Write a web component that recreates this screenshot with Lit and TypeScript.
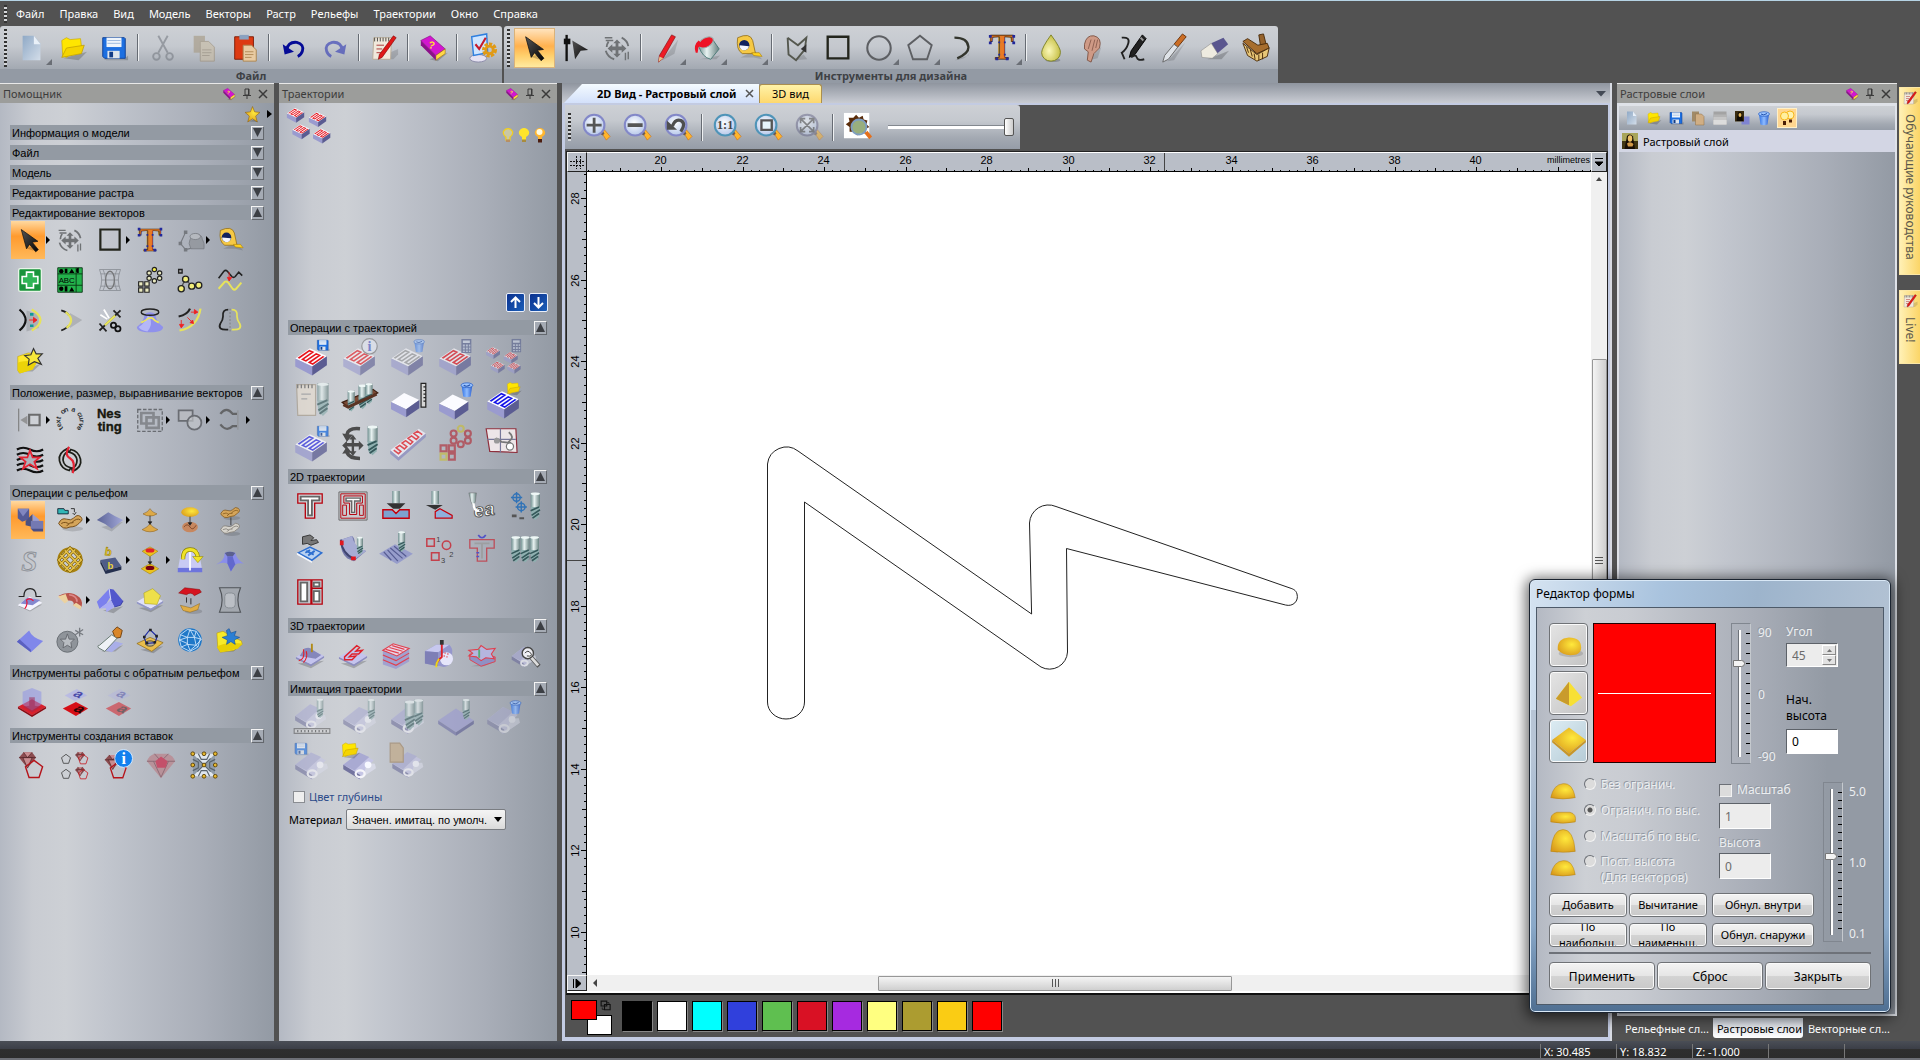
import { LitElement, html, css, svg, nothing, TemplateResult } from "lit";
import { customElement, property, state } from "lit/decorators.js";
import { classMap } from "lit/directives/class-map.js";
import { styleMap } from "lit/directives/style-map.js";

type Art = TemplateResult;

/* ---------- reusable drawing parts, all on a 32 x 32 field ---------- */

const at = (x: number, y: number, s: number, art: Art): Art =>
  svg`<g transform="translate(${x} ${y}) scale(${s})">${art}</g>`;
const faded = (art: Art, o = 0.5): Art => svg`<g opacity=${o}>${art}</g>`;

const cursor = svg`<path d="M11 25l8 3 7-1-6-4z" fill="#0003"/><path d="M6 4l19 13.500-6.500 1 7 8.500-3 2.500-7-8.500-3.500 5z" fill="url(#dark)" stroke="#111" stroke-width=".8"/>`;
const floppy = svg`<path d="M5 28h22l4-4v5H8z" fill="#0003"/><path d="M4 5h23l1 1v21H6l-2-2z" fill="#1d6fe0" stroke="#0d3f95"/><path d="M8 5h16v10H8z" fill="#eef4fb"/><path d="M9 19h13v8H9z" fill="#dfe5ec"/><path d="M11 20h4v6h-4z" fill="#123c86"/><path d="M9 8h14M9 11h14" stroke="#9bb8de"/>`;
const folder = svg`<path d="M6 27l16 2 9-9z" fill="#0003"/><path d="M4 8l5-3 4 2 11-1 1 8-16 12-4-2z" fill="#ffe600" stroke="#c9a800" stroke-width=".7"/><path d="M4 26l5-10 19-3-3 9z" fill="#f5d400" stroke="#b99700" stroke-width=".7"/>`;
const page = svg`<path d="M6 3h12l7 8v18H6z" fill="url(#page)"/><path d="M18 3v9h7z" fill="#e9f0f8"/>`;
const bin = svg`<path d="M6 9l3 20q7 3 14 0l3-20z" fill="url(#bin)"/><ellipse cx="16" cy="8" rx="11" ry="4.500" fill="#9ec6ff" stroke="#2c62c4" stroke-width="1.500"/><path d="M10 8q5 4 12-1" stroke="#2453b0" stroke-width="2" fill="none"/>`;
const calc = svg`<path d="M6 2h20v28H6z" fill="#59638f"/><path d="M9 5h14v5H9z" fill="#cdd5e6"/><path d="M9 13h4v4H9zM15 13h4v4h-4zM21 13h3v4h-3zM9 19h4v4H9zM15 19h4v4h-4zM21 19h3v4h-3zM9 25h4v3H9zM15 25h4v3h-4zM21 25h3v3h-3z" fill="#b9c3da"/>`;
const cutter = svg`<path d="M11 2h10v16H11z" fill="url(#steel)"/><path d="M11 17h10l-1 10-4 4-4-4z" fill="#8fb0b0"/><path d="M11 21l9-4M12 26l9-6M13 29l7-5" stroke="#35585a" stroke-width="1.800"/><ellipse cx="16" cy="3" rx="5" ry="1.500" fill="#eef7f6"/>`;
const snake = (c: string): Art =>
  svg`<path transform="matrix(1.300 -.9 1.500 .7 2 15)" d="M1 1H8.500V3H1.500V5H8.500V7H1.500V9H9" fill="none" stroke=${c} stroke-width="1"/>`;
const slab = svg`<path d="M2 15L15 6l15 7-13 9z" fill="#fbfbff"/><path d="M2 15l15 7v8L2 22z" fill="#9a9bcf"/><path d="M17 22l13-9v8l-13 9z" fill="#5b5c92"/>`;
const block = (c: string): Art => svg`${slab}${snake(c)}`;
const plate = (top: string, edge: string): Art =>
  svg`<path d="M3 25l14 5 14-8z" fill="#0003"/><path d="M1 18L16 9l15 8-14 9z" fill=${top}/><path d="M1 18l16 8v2L1 20zM17 26l14-9v2l-14 9z" fill=${edge}/>`;
const lens = (rim: string, inner: Art): Art =>
  svg`<path d="M22 22l3-3 6 7-4 4z" fill="#ffb52b" stroke="#c76a10" stroke-width=".6"/><path d="M20 23l3-3 2 3-2 2z" fill="#6a5a56"/><circle cx="14" cy="14" r="11" fill="url(#lens)" stroke=${rim} stroke-width="2.200"/>${inner}`;
const xform = svg`<g fill="none" stroke="#6f7275" stroke-width="2"><path d="M21 5q6 3 7 9M4 19q2 7 9 9M5 15q0-3 2-6"/><path d="M3 5h8M4 8h8M25 21v8M28 20v8" stroke-width="1.500"/></g><path d="M16 7l4 4h-2.500v3.500H21V12l5 4.500-5 4.500v-2.500h-3.500V22H20l-4 4-4-4h2.500v-3.500H11V21l-5-4.500L11 12v2.500h3.500V11H12z" fill="#6f7275"/>`;
const tape = svg`<path d="M8 26h14l9 2-8-9z" fill="#0002"/><path d="M5 5q13-6 16 3l3 14H10Q3 18 5 5z" fill="#f6c945" stroke="#8b6510" stroke-width=".8"/><path d="M20 21h8l3 4-9-1z" fill="#ffd21f" stroke="#a87900" stroke-width=".6"/><circle cx="12" cy="13" r="5.500" fill="#11225f"/><path d="M7 13a5 5 0 0 0 10 1z" fill="#f4f6ff"/>`;
const gem = (a: string, b: string, c: string): Art =>
  svg`<path d="M3 13L10 5h13l6 8-13 16z" fill=${a}/><path d="M10 5l6 8 7-8M3 13h26M9 13l7 16 7-16z" fill=${b} stroke=${c} stroke-width="1"/>`;
const penta = (c: string): Art => svg`<path d="M16 4l12 9-5 15H9L4 13z" fill="none" stroke=${c} stroke-width="2"/>`;
const shapeT = (stroke: string): Art =>
  svg`<path d="M3 3h26v10h-8v16H11V13H3z" fill="#d5d8dc" stroke=${stroke} stroke-width="1.400"/><path d="M6 6h20v4h-8v16h-4V10H6z" fill="#fff" stroke="#666" stroke-width="2"/>`;
const swirl = (a: string, b: string): Art =>
  svg`<ellipse cx="19" cy="26" rx="12" ry="3" fill="#0002"/><path d="M3 20q3-7 9-5 5 2 8-1 4-5 8-2 4 4-1 7-4 5-11 5-8 4-13-4z" fill=${a} stroke=${b}/><path d="M6 20q5-3 9 1M18 19q6-6 10-3M12 23q3-5 8-4" fill="none" stroke=${b}/>`;
const carved = svg`<path d="M2 16L16 5l13 7-3 3q4 2 3 5l-13 9z" fill="#c5c5e5"/><path d="M2 16L16 5l9 4-13 12z" fill="#a9aad2"/><path d="M2 16l15 9v4L2 20z" fill="#73749f"/><path d="M30 15q-8-1-9 7l-5 7 15-10z" fill="#d7d9e6"/><ellipse cx="17" cy="24" rx="4" ry="3" fill="none" stroke="#f5f5fa" stroke-width="2"/><circle cx="24" cy="16" r="3" fill="#f7f8ff"/>`;
const isoA = (fill: string): Art =>
  svg`<text transform="matrix(.9 .35 -.7 .6 12 20)" font-family="Liberation Sans" font-weight="bold" font-size="17" fill=${fill}>a</text>`;
const dome = (d: string): Art =>
  svg`<path d=${d} fill="url(#gold)" stroke="#a77a12" stroke-width=".5"/>`;

const curveWord = Array.from("text on a curve").map((ch, i) => {
  const deg = -130 + i * 18.5;
  return ch === " " ? nothing
    : svg`<text transform="rotate(${deg} 16 17) translate(16 6)" text-anchor="middle">${ch}</text>`;
});

/* ---------- icon table ---------- */

const ICONS: Record<string, Art> = {
  page, folder, floppy, cursor, xform, tape, bin,
  cut: faded(svg`<path d="M11 3l10 18M21 3L11 21" stroke="#777c84" stroke-width="2"/><circle cx="9" cy="25" r="3.500" fill="none" stroke="#777c84" stroke-width="2"/><circle cx="23" cy="25" r="3.500" fill="none" stroke="#777c84" stroke-width="2"/>`, 0.6),
  copy: faded(svg`<path d="M5 3h12v18H5z" fill="#a79b86"/><path d="M12 9h9l6 6v15H12z" fill="#c9bda6" stroke="#9b8e78"/><path d="M14 18h10M14 21h10M14 24h8" stroke="#9b8e78"/>`, 0.65),
  paste: svg`<path d="M5 4h20v24H5z" fill="#dd3a12" stroke="#7e1d06"/><path d="M10 2h10v5H10z" fill="#8aa1c0"/><path d="M14 13h9l5 5v12H14z" fill="#e9cba2" stroke="#aa8450"/><path d="M16 20h9M16 23h9M16 26h7" stroke="#b18b57"/>`,
  undo: svg`<path d="M8 18q2-9 11-8 8 2 6 9-1 4-5 6" fill="none" stroke="#050b96" stroke-width="3"/><path d="M4 12l2 11 10-3z" fill="#050b96"/>`,
  redo: faded(svg`<path d="M24 18q-2-9-11-8-8 2-6 9 1 4 5 6" fill="none" stroke="#4a52b8" stroke-width="3"/><path d="M28 12l-2 11-10-3z" fill="#4a52b8"/>`, 0.75),
  notes: svg`<path d="M6 28h20l5-5v-6z" fill="#0002"/><path d="M5 5h19l-1 23H4z" fill="#f1e9dc" stroke="#b8ab97"/><path d="M6 5v4M9 5v4M12 5v4M15 5v4M18 5v4M21 5v4" stroke="#444"/><path d="M8 13h8M8 17h6M8 21h5" stroke="#a33"/><path d="M26 3l3 2-15 21-4 2 1-5z" fill="#e01818" stroke="#700" stroke-width=".6"/>`,
  book: svg`<path d="M12 28l9 2 11-9z" fill="#0003"/><path d="M3 8L13 3l16 14-10 7z" fill="#d316cf" stroke="#7b0a7a" stroke-width=".6"/><path d="M19 24l10-7v5l-10 7z" fill="#ffd84a" stroke="#9b6c00" stroke-width=".6"/><path d="M3 8l16 16v5L3 13z" fill="#8c1089"/><text x="11" y="17" font-family="Liberation Sans" font-size="11" font-weight="bold" fill="#ffe02e" transform="rotate(14 16 14)">?</text>`,
  options: svg`<ellipse cx="12" cy="27" rx="9" ry="4" fill="#e6e2f2" stroke="#8a8aa8"/><path d="M5 4l16-3 1 20-15 3z" fill="#cfe5ff" stroke="#2f7fdf" stroke-width="1.500"/><path d="M9 12l4 5 7-12" fill="none" stroke="#c5192b" stroke-width="2.200"/><circle cx="24" cy="18" r="6" fill="none" stroke="#e09a16" stroke-width="4" stroke-dasharray="3.200 1.300"/><circle cx="24" cy="18" r="4" fill="none" stroke="#e09a16" stroke-width="3"/>`,
  node: svg`<path d="M6 2v28" stroke="#111" stroke-width="2.500"/><path d="M3 6h7v6H3z" fill="#111"/><path d="M12 8l17 10-8 1-6 9z" fill="url(#dark)"/>`,
  pencil: svg`<path d="M12 29l17-22-4 15z" fill="#0002"/><path d="M22 2l4 2-13 23-5 4 1-7z" fill="#ee1c25" stroke="#850c10" stroke-width=".7"/><path d="M9 25l4 2-5 4z" fill="#e6c08b"/>`,
  fill: svg`<path d="M8 28h18l4-4z" fill="#0002"/><path d="M7 14L22 7l7 10-9 11q-9-2-13-14z" fill="url(#steel)" stroke="#4c7a78"/><ellipse cx="15" cy="10" rx="8.500" ry="5" transform="rotate(-30 15 10)" fill="#ee1426" stroke="#9ab5b3"/><path d="M4 21q-3-8 3-13l6 5-6 2-1 6z" fill="#ee1426"/>`,
  polyline: svg`<path d="M13 29l14-1-4-5z" fill="#0002"/><path d="M6 5l11 8 9-8-2 15M6 5l1 18 8 6 9-11" fill="none" stroke="#55584f" stroke-width="2"/><path d="M20 17l6-5v9z" fill="#333"/>`,
  rect: svg`<path d="M5 4h22v23H5z" fill="#c6c9ce66" stroke="#23251c" stroke-width="2.500"/>`,
  ellipse: svg`<circle cx="16" cy="16" r="12.500" fill="none" stroke="#5d5f63" stroke-width="2.200"/>`,
  pentagon: svg`<path d="M16 3l12.500 10-5 15h-15l-5-15z" fill="none" stroke="#5d5f63" stroke-width="2"/>`,
  arc: svg`<path d="M9 29q15-1 17-11l-2 6z" fill="#0002"/><path d="M9 5q14 0 15 10 0 7-12 12" fill="none" stroke="#33352d" stroke-width="2.500"/>`,
  text: svg`<text x="16" y="28" text-anchor="middle" font-family="Liberation Serif" font-weight="bold" font-size="38" fill="#e87a26" stroke="#3a2408" stroke-width=".8">T</text><path d="M2 2h3v3H2zM27 2h3v3h-3zM2 9h3v3H2zM27 9h3v3h-3zM9 26h3v3H9zM20 26h3v3h-3zM12 9h2v2h-2zM18 9h2v2h-2zM12 22h2v2h-2zM18 22h2v2h-2z" fill="#22289b"/>`,
  drop: svg`<ellipse cx="18" cy="29" rx="8" ry="2" fill="#0003"/><path d="M16 2q11 15 10 19a10 9 0 0 1-20 0q0-5 10-19z" fill="url(#drop)" stroke="#7e8226"/>`,
  smudge: svg`<path d="M12 29l10-2 4-12z" fill="#0002"/><path d="M8 12Q10 2 18 3q9 2 6 13l-6 6-3 9-4-2 1-9-4-3z" fill="#cf9a86" stroke="#7f5546"/><path d="M12 17l3-10M16 19l3-12M20 16l2-9" stroke="#8d5f50"/>`,
  pen: svg`<path d="M26 2l4 4-12 17-6 3 2-7z" fill="#222" stroke="#000"/><path d="M24 5l3 3" stroke="#999" stroke-width="2"/><path d="M4 5q9-1 7 6t-7 10l3 7M14 26q5-4 6 0t8 2" fill="none" stroke="#222" stroke-width="2"/>`,
  brush: svg`<path d="M9 30l7-1 12-19z" fill="#0002"/><path d="M25 1l4 3-9 11-4-3z" fill="#cb6d25" stroke="#6b330a"/><path d="M16 12l4 3-10 13-6 3 2-7z" fill="#dfe3e8" stroke="#666"/>`,
  eraser: svg`<path d="M8 28h15l8-9z" fill="#0003"/><path d="M12 11l13-6 5 7-12 10z" fill="#5a568f"/><path d="M12 11l7 11-6 5-11-1-1-7z" fill="#eeebe0" stroke="#888" stroke-width=".6"/>`,
  stamp: svg`<path d="M19 2l5-1 3 12-6 2z" fill="#96632c" stroke="#4b2c0b"/><path d="M2 9l5-3 11 7 10-2 2 5-13 6z" fill="#a76e2e" stroke="#4b2c0b"/><path d="M2 11l15 12 13-7-2 9-11 5L7 24z" fill="#e8c777" stroke="#4b2c0b"/><path d="M6 15l2 6M10 18l2 7M14 22l1 6M19 23v6M23 21v7" stroke="#4b2c0b"/>`,
  zin: lens("#8388c8", svg`<path d="M14 6v16M6 14h16" stroke="#565656" stroke-width="3"/>`),
  zout: lens("#8388c8", svg`<path d="M6 14h16" stroke="#565656" stroke-width="4"/>`),
  zprev: lens("#8388c8", svg`<path d="M10 15q3-8 9-6 6 3 0 12" fill="none" stroke="#4e4e4e" stroke-width="3.500"/><path d="M4 9v10h11z" fill="#4e4e4e"/>`),
  z11: lens("#4f94b8", svg`<text x="14" y="18" text-anchor="middle" font-family="Liberation Serif" font-weight="bold" font-size="13" fill="#444">1:1</text>`),
  zobj: lens("#4f94b8", svg`<path d="M9 9h11v10H9z" fill="#e6f6fb" stroke="#555" stroke-width="2.500"/>`),
  zfit: faded(lens("#668", svg`<path d="M7 7l14 14M21 7L7 21M7 12V7h5M16 7h5v5M21 16v5h-5M12 21H7v-5" fill="none" stroke="#444" stroke-width="1.800"/>`), 0.5),
  preview: svg`<path d="M1 1h27v27H1z" fill="#fff"/><path d="M14 3l3 3 4-2 1 4 4 1-1 4 3 3-4 2v5l-5-1-4 3-3-4-5 0 0-5-4-3 4-3-1-4 5 0z" fill="#5a2c0a"/><circle cx="17" cy="16" r="8" fill="#a8cf9bcc" stroke="#7d9dc0" stroke-width="2"/><path d="M23 23l3-3 5 6-3 3z" fill="#e5701c"/>`,

  envelope: faded(svg`<path d="M5 20l6-13M5 20l6 7 8-2" fill="none" stroke="#63666b" stroke-width="1.300"/><path d="M3 18h4v4H3zM9 5h4v4H9zM9 25h4v4H9z" fill="#63666b"/><path d="M15 20q1-9 8-11 7 1 7 6 3 4 2 11H17z" fill="#8f9399" stroke="#6b6f75"/><ellipse cx="22" cy="12" rx="6" ry="3.500" fill="#b9bcc1" stroke="#6b6f75"/>`, 0.75),
  cross: svg`<rect x="3" y="3" width="26" height="26" rx="2" fill="#18933a" stroke="#e8f4e8" stroke-width="1.500"/><path d="M12 7h8v5h5v8h-5v5h-8v-5H7v-8h5z" fill="#2fb556" stroke="#fff" stroke-width="1.800"/>`,
  pattern: svg`<path d="M2 2h28v28H2z" fill="#23b24b" stroke="#0a3213"/><path d="M2 9h28M2 22h28M23 2v28" stroke="#0a3213"/><circle cx="6" cy="6" r="2.500"/><path d="M10 3h3v5h-3zM15 8l3-5 3 5zM26 2a3 3 0 0 0 0 6z"/><text x="3" y="19" font-size="9" font-family="Liberation Sans">ABC</text><circle cx="6" cy="26" r="2.500"/><path d="M10 23h3v6h-3zM15 29l3-5 3 5z"/>`,
  warp: faded(svg`<path d="M4 4h24q-5 12 0 24H4Q9 16 4 4zM8 4q6 12 0 24M24 4q-6 12 0 24M5 9h22M6 16h20M5 23h22" fill="none" stroke="#777b82"/><ellipse cx="16" cy="16" rx="5" ry="10" fill="none" stroke="#555" stroke-width="1.500"/>`, 0.7),
  blocks: svg`<g fill="#e9e9c0" stroke="#222" stroke-width="1.300"><circle cx="21" cy="4" r="2.500" fill="#f5ee4c"/><circle cx="15" cy="8" r="2.500"/><circle cx="27" cy="8" r="2.500"/><circle cx="15" cy="14" r="2.500"/><circle cx="27" cy="14" r="2.500"/><circle cx="21" cy="17" r="2.500"/><path d="M3 18h5v5H3zM10 18h5v5h-5zM3 25h5v5H3zM10 25h5v5h-5z"/></g>`,
  curvepaste: svg`<path d="M5 26l6-11 7 8 9-1" fill="none" stroke="#555" stroke-width="1.500"/><g fill="#f3ee7a" stroke="#222" stroke-width="1.500"><circle cx="6" cy="26" r="3.500"/><circle cx="11" cy="15" r="3.500"/><circle cx="18" cy="23" r="3.500"/><circle cx="26" cy="22" r="3.500"/><path d="M3 4h4v4H3z" fill="#aaa"/></g>`,
  drape: svg`<path d="M3 14l6-8q2-2 4 0l5 6q2 2 4 0l4-5 4 4" fill="none" stroke="#222" stroke-width="1.800"/><path d="M3 26l7-8q2-1 4 1l5 7q2 2 4 0l6-7" fill="none" stroke="#e7e35b" stroke-width="2.200"/><path d="M15 7v8M13 13l2 4 3-4z" stroke="#e22" fill="#e22"/>`,
  offset: svg`<path d="M12 5l14 4v16l-14 4z" fill="#0002"/><path d="M4 4q14 12 0 24" fill="none" stroke="#111" stroke-width="2.500"/><path d="M18 4q20 12 0 24" fill="none" stroke="#e7e35b" stroke-width="2.500"/><path d="M15 16h8M20 13l4 3-4 3z" fill="#e22" stroke="#e22"/><path d="M16 8h4v3h-4zM16 21h4v3h-4z" fill="#199"/>`,
  fillet: svg`<path d="M16 8l14 8-14 9z" fill="#0002"/><path d="M6 5q7 2 9 6M6 28q7-3 9-6" fill="none" stroke="#222" stroke-width="2"/><path d="M11 7q12 9 1 18" fill="none" stroke="#e7e35b" stroke-width="2.500"/>`,
  trim: svg`<path d="M4 28L28 5M20 5l8 8M4 20l8 9" stroke="#222" stroke-width="2"/><path d="M10 22l12-11" stroke="#e7e35b" stroke-width="2.500"/><path d="M5 10l8 5M9 4l6 10" stroke="#fff" stroke-width="2"/><circle cx="20" cy="22" r="3" fill="none" stroke="#111" stroke-width="2"/><circle cx="25" cy="26" r="3" fill="none" stroke="#111" stroke-width="2"/>`,
  relieffromvec: svg`<path d="M1 24q8-6 9-15 6-4 12 0 1 9 9 15 0 6-15 6T1 24z" fill="#8f91ec"/><path d="M3 24q8-5 10-13 3 0 4 6t-4 12q-8-1-10-5z" fill="#b5b7f8"/><ellipse cx="16" cy="7" rx="10" ry="3.500" fill="none" stroke="#222" stroke-width="1.600"/><path d="M6 19q6-3 8-5 3-1 5 0 2 3 7 5" fill="none" stroke="#eee75a" stroke-width="2"/>`,
  sweep: svg`<path d="M3 12Q13 10 16 3" fill="none" stroke="#222" stroke-width="2.500"/><path d="M4 28Q25 24 28 3" fill="none" stroke="#e7e35b" stroke-width="2.500"/><path d="M6 16v7M4 21l2 4 3-4zM13 13l5 5M16 19l4 1-1-4zM17 7h6M21 4l4 3-4 2z" fill="#e22" stroke="#e22"/>`,
  mirror: svg`<path d="M14 4q-7 0-6 8 0 4-3 8-4 8 9 7" fill="none" stroke="#222" stroke-width="2"/><path d="M18 4q7 0 6 8 0 4 3 8 4 8-9 7" fill="none" stroke="#e7e35b" stroke-width="2"/><path d="M16 3v26" stroke="#777" stroke-dasharray="2 2"/>`,
  starfolder: svg`<path d="M5 29h14l10-9z" fill="#0003"/><path d="M2 12l12-4 8 1 3 6-9 12-12 4-2-3z" fill="#ffe92c" stroke="#b99700" stroke-width=".6"/><path d="M2 19q8-3 23-2l-6 10-14 4-3-3z" fill="#ecd308"/><path d="M20 3l3 6h7l-5 5 4 7-8-3-7 4 1-7-5-4 7-1z" fill="#f7e83b" stroke="#333" stroke-width="1.300"/>`,

  align: faded(svg`<path d="M3 3v26" stroke="#777" stroke-width="1.500"/><path d="M5 16l8-5v10z" fill="#888"/><path d="M15 10h12v12H15z" fill="#d0d3d8" stroke="#555" stroke-width="2.500"/>`, 0.8),
  textcurve: svg`<g font-family="Liberation Sans" font-size="8" font-weight="bold" fill="#2c2f33">${curveWord}</g>`,
  nesting: svg`<g font-family="Liberation Sans" font-weight="bold" font-size="15" fill="#17180f" stroke="#17180f" stroke-width=".4"><text x="1" y="14">Nes</text><text x="2" y="28">ting</text></g>`,
  weld: svg`<path d="M2 4h28v25H2z" fill="none" stroke="#696c72" stroke-width="1.500" stroke-dasharray="4 2"/><path d="M6 8h14v12H6zM12 13h14v12H12z" fill="none" stroke="#85888e" stroke-width="3"/>`,
  merge: svg`<path d="M3 5h16v12H3z" fill="#b7bac0" stroke="#6a6d73" stroke-width="2"/><circle cx="21" cy="19" r="8" fill="#c3c6cbaa" stroke="#6a6d73" stroke-width="2"/>`,
  join: faded(svg`<path d="M5 9q7-9 14 0h5M5 21q7 9 14 2h5" fill="none" stroke="#555" stroke-width="2.500"/><path d="M25 5v22" stroke="#888"/>`, 0.8),
  texture: svg`<path d="M1 4q7-4 15 0t15 0M1 10q7-4 15 0t15 0M1 16q7-4 15 0t15 0M1 22q7-4 15 0t15 0M1 28q7-4 15 0t15 0" fill="none" stroke="#111" stroke-width="2.500"/><path d="M16 5l3 8 8 0-6 5 3 8-8-5-8 5 3-8-6-5h8z" fill="#aeb3bb" stroke="#e52333" stroke-width="2"/>`,
  spiral: svg`<path d="M13 3Q2 8 4 17q2 9 11 11l2-3q-8-2-9-9 0-7 6-10z" fill="#c7c9cc" stroke="#1d1f19" stroke-width="2"/><path d="M19 29q11-5 9-14Q26 6 17 4l-2 3q8 2 9 9 0 7-6 10z" fill="#c7c9cc" stroke="#1d1f19" stroke-width="2"/><path d="M15 1q-6 9 1 13t3 17" fill="none" stroke="#e52333" stroke-width="2.500"/>`,

  smooth: svg`<path d="M2 3h13v12l-8 3-5-4z" fill="#555b96"/><path d="M2 3h13l-7 9z" fill="#8186bf"/><path d="M11 17l8-8v15l-8-2z" fill="#4c517f"/><path d="M19 9l8 7-8 8z" fill="#9a9ed2"/><path d="M17 17h14v12H20l-3-3z" fill="#4a4f86"/><path d="M17 17h14v9H17z" fill="#7479b2"/>`,
  loadrelief: svg`<path d="M2 3h7l1 2h4v4H2z" fill="#33b7b7" stroke="#123"/><path d="M17 3h4v4M19 8l2 2 2-3" stroke="#222" fill="none"/>${swirl("#d5a55a", "#6d4310")}`,
  plane: svg`<path d="M6 24l12 5 13-11z" fill="#0002"/><path d="M1 16L14 7q8 5 17 9L18 26Q11 20 1 16z" fill="url(#blueP)"/>`,
  scale: svg`<path d="M16 3q2 4 8 6-8 5-16 0 6-2 8-6zM16 20q2 4 9 7-9 5-18 0 7-3 9-7z" fill="#dda947" stroke="#865b16" stroke-width=".6"/><path d="M16 11v9M14 18l2 3 2-3z" stroke="#333"/>`,
  offsetrel: svg`<ellipse cx="16" cy="7" rx="10" ry="5.500" fill="url(#gold)"/><ellipse cx="16" cy="24" rx="9" ry="6" fill="#c7875f"/><path d="M9 24q4-5 7 0t7-2" fill="none" stroke="#7c4527"/><path d="M16 12v9M14 19l2 3 2-3z" stroke="#333"/>`,
  pastemode: svg`${at(3, -7, 0.8, swirl("#d5a55a", "#7d5216"))}${at(3, 11, 0.8, swirl("#d6d3cc", "#77736b"))}<path d="M17 13v9" stroke="#333"/>`,
  sweepS: svg`<text x="6" y="29" font-family="Liberation Serif" font-style="italic" font-weight="bold" font-size="33" fill="#c5c8cd" stroke="#8d9198" stroke-width="1">S</text>`,
  weave: svg`<circle cx="16" cy="16" r="13" fill="none" stroke="#a8820f" stroke-width="3"/><path d="M5 10l16 16M10 5l17 17M22 4L4 22M28 10L10 28M16 2l13 14-13 13L3 16z" fill="none" stroke="#7a5c08" stroke-width="3"/><path d="M5 10l16 16M10 5l17 17M22 4L4 22M28 10L10 28M16 2l13 14-13 13L3 16z" fill="none" stroke="#e6c34b" stroke-width="1.700"/>`,
  letterb: svg`<text x="10" y="11" font-family="Liberation Sans" font-weight="bold" font-size="13" fill="#e6c829" stroke="#8a7206" stroke-width=".5" transform="rotate(10 14 8)">b</text><path d="M5 16l17-3 7 10-18 5z" fill="#4f5c88"/><path d="M5 16l6 12v4L5 20zM11 28l18-5v4l-18 5z" fill="#25304f"/><text x="13" y="26" font-family="Liberation Sans" font-weight="bold" font-size="11" fill="#ecd23a">b</text>`,
  dtm: svg`<path d="M16 1l9 5-9 6-9-6zM16 20l10 6-10 6-10-6z" fill="#ecc31c" stroke="#9a7a06" stroke-width=".6"/><ellipse cx="16" cy="5" rx="5" ry="2.500" fill="#e2202a"/><ellipse cx="16" cy="25" rx="5" ry="2.500" fill="#701"/><path d="M16 12v8M14 18l2 3 2-3z" stroke="#333"/>`,
  turn: svg`<path d="M2 28L6 5h20l4 23z" fill="#c9cbf4"/><path d="M2 25h28v5H2z" fill="#6d74dd"/><path d="M16 6v22" stroke="#fff" stroke-width="2"/><path d="M8 15Q8 4 16 4q8 0 9 9" fill="none" stroke="#8c8308" stroke-width="5"/><path d="M8 15Q8 4 16 4q8 0 9 9" fill="none" stroke="#f0e327" stroke-width="3.500"/><path d="M19 12h12l-6 7z" fill="#f0e327" stroke="#8c8308" stroke-width=".6"/>`,
  ramp: svg`<path d="M0 21q10-4 10-13 6-3 12 0 2 8 10 12-6-1-10 1l-5 8-4-9q-6-2-13 1z" fill="#8a8eea"/><path d="M10 8q6-3 12 0l-3 4h-6z" fill="#5b608f"/><path d="M13 12h6l3 9-5 8-4-9z" fill="#6268cd"/>`,
  tworail: svg`<path d="M3 23l13 6 14-8z" fill="#0003"/><path d="M2 22L15 12l15 7-14 9z" fill="#f4f4ff"/><path d="M5 20l8-7 15 3-9 6z" fill="#8488cf"/><path d="M3 12h6q0-9 7-9t7 9h6" fill="none" stroke="#222" stroke-width="1.300"/><path d="M10 26q4-5 2-10 4-3 8 1" fill="none" stroke="#e13" stroke-width="1.300"/>`,
  ringrel: svg`<path d="M3 11Q16 4 27 13q5 6 1 13l-8-4q2-7-10-5z" fill="#b9534a"/><path d="M2 12l9-3 3 8-4 3z" fill="#ecd2a0"/><path d="M28 27l-9-5 4-3 6 4z" fill="#ecd2a0"/><path d="M15 10q9 1 9 8" stroke="#d88" fill="none" stroke-width="2"/>`,
  fold: svg`<path d="M8 28l12 3 11-8z" fill="#0003"/><path d="M15 3l5 1 11 13-3 5-7 2-4-8z" fill="#5257cc"/><path d="M15 3L1 18l3 8 8-6 4-7z" fill="#7b80ee"/><path d="M4 26l8-6 5-4 4 8-9 6-1-5z" fill="#a9acf5"/><path d="M15 3l2 13" stroke="#d9dbff"/><path d="M31 17l-3 5-7 2" fill="none" stroke="#3339a0"/>`,
  addshape: svg`${plate("#dfe0f8", "#9195c8")}<path d="M9 8l10-5 9 8-4 10-14-1z" fill="#eee04a" stroke="#a69a14" stroke-width=".6"/>`,
  redblock: svg`<ellipse cx="20" cy="29" rx="10" ry="3" fill="#0002"/><path d="M3 8l7-6 17 2 2 3-8 4q-4-5-9-1z" fill="#d51420" stroke="#700" stroke-width=".5"/><path d="M5 22l12 3 10-5-2 7-9 3-8-2z" fill="#e1ad44" stroke="#7f5a10" stroke-width=".5"/><path d="M12 13v6M17 14v7" stroke="#222"/>`,
  pillow: svg`<path d="M4 2h24q-6 14 0 28H4Q10 16 4 2z" fill="#a3a8af" stroke="#4f5358" stroke-width="1.300"/><rect x="10" y="8" width="12" height="17" rx="4" fill="#bbbfc5" stroke="#848990"/>`,
  bluep: svg`<path d="M1 18L15 5q3 8 16 12L17 30z" fill="#8087ea"/><path d="M1 18l16 12v-3L4 15z" fill="#5a60c0"/>`,
  coin: svg`<circle cx="13" cy="18" r="12" fill="#8f949a" stroke="#64696f"/><path d="M13 9l2 6 6 0-4 4 1 6-5-3-5 3 1-6-4-4h6z" fill="#b9bdc2" stroke="#62666c"/><path d="M27 2v10M22 5l9 5M31 4l-9 6" stroke="#777b81" stroke-width="1.500"/>`,
  saw: svg`<path d="M6 29h16l9-7z" fill="#0003"/><path d="M10 28L20 17l11 3-13 10z" fill="#a9aee8"/><path d="M19 6l5-5 6 4-2 8-6 1z" fill="#d9862a" stroke="#6c3a08"/><path d="M18 10l6 4L10 29l-7-4q-2-3 1-3z" fill="#eff2f6" stroke="#5b6f66"/>`,
  yellowpoly: svg`<path d="M5 27l15 4 11-8z" fill="#0003"/><path d="M1 20l15-7 15 6-13 10z" fill="#e9bd4b" stroke="#8d6714" stroke-width=".8"/><ellipse cx="16" cy="20" rx="5" ry="3" fill="#b9b09a" stroke="#443"/><path d="M9 13l7-9 8 8-2 7-10 1z" fill="none" stroke="#1d2aa5" stroke-width="1.300"/><path d="M15 3h3v3h-3zM8 11h3v3H8zM22 10h3v3h-3zM11 18h3v3h-3zM20 17h3v3h-3z" fill="#222"/>`,
  globe: svg`<circle cx="16" cy="16" r="13.500" fill="#1f78c8"/><path d="M5 10l8-6 10 2 5 8-3 10-9 5-10-5-2-8zM4 16l9-3 3-9 5 9 8 2-6 7-7 6-3-8zM13 13h8l2 9-10-1zM5 10l8 3M23 6l-2 7M25 24l-2-2M6 24l7-3" fill="none" stroke="#cfe6fb" stroke-width="1"/>`,
  bluestar: svg`<path d="M5 29h15l10-8z" fill="#0003"/><path d="M1 8l7-2 10 6 11 5 1 4-10 7-15 2-3-5z" fill="#f7ea2a" stroke="#b99700" stroke-width=".6"/><path d="M1 24q8-6 29-4l-5 6-20 4z" fill="#e8cf06"/><path d="M15 3l2 5 6-2-2 5 6 2-6 3 1 5-5-3-5 3 1-5-6-3 6-2-1-6z" fill="#2b7fd4" stroke="#0e478a" stroke-width=".6"/>`,

  invblock: svg`<path d="M3 24l14 7 14-9z" fill="#0003"/><path d="M1 21l15-8 15 8-15 9z" fill="#d9202c"/><path d="M1 21l15 9 15-9v2l-15 9-15-9z" fill="#8c0a12"/><path d="M6 5l10-4 10 4v14l-10 6-10-6z" fill="#8f92e488"/><path d="M13 11h6v9l7 1-10 6-10-6 7-1z" fill="#a0285088"/>`,
  invpair: svg`<path d="M3 23l14-7 13 7-13 8z" fill="#d60f16"/>${at(1, 5, 1, isoA("#2b0505"))}<path d="M5 9l13-7 11 7-13 6z" fill="#a9a9ee88"/>${at(2, -9, 0.9, isoA("#4a4aa8"))}`,
  gempent: svg`${at(0, -1, 0.7, gem("#8c4c50", "#c98c90", "#4f2225"))}${at(6, 8, 0.76, penta("#b5141b"))}`,
  gemgroup: svg`${at(0, 3, 0.4, penta("#333"))}${at(0, 19, 0.4, penta("#333"))}${at(15, 0, 0.4, gem("#8c4c50", "#c98c90", "#4f2225"))}${at(18, 3, 0.42, penta("#c5141b"))}${at(15, 16, 0.4, gem("#8c4c50", "#c98c90", "#4f2225"))}${at(18, 19, 0.42, penta("#c5141b"))}`,
  geminfo: svg`${at(0, 2, 0.65, gem("#8c4c50", "#c98c90", "#4f2225"))}${at(5, 10, 0.7, penta("#b5141b"))}<circle cx="22" cy="9" r="9.500" fill="#1380ee" stroke="#d9ecff" stroke-width="1"/><text x="22" y="15" text-anchor="middle" font-family="Liberation Serif" font-weight="bold" font-size="17" fill="#fff">i</text>`,
  ruby: svg`<path d="M1 12Q3 6 9 4h14q6 2 8 8L16 30z" fill="#b8929a"/><path d="M9 4l7 8 8-8M1 12h30M8 12l8 17 8-17" fill="none" stroke="#8a6a74"/><path d="M10 12l6-5 7 5-2 7h-9z" fill="#c4506a"/>`,
  diamonds: svg`<path d="M4 4h24v24H4z" fill="#dfe6ee"/><path d="M4 4l12 12L4 28zM28 4L16 16l12 12z" fill="#8f9ba8"/><path d="M10 4l3 6 6 0 3-6M4 10l6 3v6l-6 3M28 10l-6 3v6l6 3M10 28l3-6h6l3 6M9 9l14 14M23 9L9 23" fill="none" stroke="#59636d" stroke-width="1.200"/><g fill="#e8b92c" stroke="#5c430a"><circle cx="4" cy="4" r="2"/><circle cx="16" cy="4" r="2"/><circle cx="28" cy="4" r="2"/><circle cx="4" cy="16" r="2"/><circle cx="16" cy="16" r="2"/><circle cx="28" cy="16" r="2"/><circle cx="4" cy="28" r="2"/><circle cx="16" cy="28" r="2"/><circle cx="28" cy="28" r="2"/></g>`,

  blocks4: svg`${at(-1, -2, 0.45, block("#e8141c"))}${at(15, 1, 0.45, block("#e8141c"))}${at(3, 10, 0.45, block("#e8141c"))}${at(18, 13, 0.45, block("#e8141c"))}`,
  tpsave: svg`${at(0, 3, 0.95, block("#e8141c"))}${at(19, 0, 0.38, floppy)}`,
  tpinfo: faded(svg`${at(0, 3, 0.95, block("#e8141c"))}<circle cx="24" cy="7" r="6.500" fill="#e7ebf5" stroke="#777"/><text x="24" y="11" text-anchor="middle" font-family="Liberation Serif" font-weight="bold" font-size="12" fill="#4a55c8">i</text>`, 0.6),
  tpdel: faded(svg`${at(0, 3, 0.95, block("#9a9a9a"))}${at(19, 0, 0.4, bin)}`, 0.6),
  tpcalc: faded(svg`${at(0, 3, 0.95, block("#e8141c"))}${at(18, 0, 0.42, calc)}`, 0.65),
  tpcalcs: faded(svg`${at(0, 5, 0.42, block("#e8141c"))}${at(15, 9, 0.42, block("#e8141c"))}${at(4, 17, 0.42, block("#e8141c"))}${at(18, 18, 0.4, block("#e8141c"))}${at(20, 0, 0.4, calc)}`, 0.6),
  tpsheet: faded(svg`<path d="M3 3h16v26H4z" fill="#e6ddd0" stroke="#a99e8d"/><path d="M4 3v3M7 3v3M10 3v3M13 3v3M16 3v3" stroke="#555"/><path d="M7 11h8M7 15h5" stroke="#999"/>${at(10, 0, 0.95, cutter)}`, 0.7),
  tprack: svg`<path d="M1 18L27 7l4 3L6 22z" fill="#7a4a35" stroke="#3c1f12"/>${at(-1, 7, 0.6, cutter)}${at(7, 2, 0.7, cutter)}${at(14, 1, 0.6, cutter)}<path d="M2 20l4 2 24-11" fill="none" stroke="#5a3323" stroke-width="2.500"/>`,
  tpdim: svg`${at(0, 5, 0.85, slab)}<path d="M27 2h4v20h-4z" fill="#d6d6d6" stroke="#222"/><path d="M29 5h2M29 8h2M29 11h2M29 14h2M29 17h2" stroke="#222"/>`,
  tpdelblk: svg`${at(0, 6, 0.88, slab)}${at(18, 0, 0.45, bin)}`,
  tpload: svg`${at(0, 3, 0.95, block("#1414e8"))}${at(17, -1, 0.45, folder)}`,
  tpsaveb: faded(svg`${at(0, 3, 0.95, block("#3b3be0"))}${at(19, 0, 0.38, floppy)}`, 0.75),
  tpxform: svg`<path d="M16 4Q6 3 5 9M5 24q2 5 11 5" fill="none" stroke="#4c4c4c" stroke-width="3"/><path d="M1 8l9 1-5 6zM1 25l8-1-4-5z" fill="#4c4c4c"/><path d="M10 9l3 4h-2v3h4v-2l4 4-4 4v-3h-4v4h2l-3 4-3-4h2v-4H5v3l-4-4 4-4v2h4v-3H7z" fill="#4c4c4c"/>${at(13, 0, 0.85, cutter)}`,
  tplong: faded(svg`<path d="M1 22L25 4l6 4L8 28z" fill="#f2f2fb"/><path d="M1 22l7 6v3l-7-6zM8 28L31 8v3L8 31z" fill="#8b8cc0"/><path d="M4 22l4 3 2-2-4-3 3-2 4 3 2-2-4-3 3-2 4 3 2-2-4-3 3-2 4 3 2-2-4-3 3-2 4 3" fill="none" stroke="#e8262e" stroke-width="1.300"/>`, 0.75),
  tparray: faded(svg`<g fill="none" stroke="#b1222c" stroke-width="1.800"><circle cx="20" cy="4" r="2.500" stroke="#c9bd32"/><circle cx="14" cy="8" r="2.500"/><circle cx="26" cy="8" r="2.500"/><circle cx="14" cy="14" r="2.500"/><circle cx="26" cy="14" r="2.500"/><circle cx="20" cy="17" r="2.500"/><path d="M3 18h5v5H3zM10 18h5v5h-5zM10 25h5v5h-5z"/><path d="M3 25h5v5H3z" stroke="#c9bd32"/></g>`, 0.6),
  tpsheet2: svg`<path d="M1 4h25l1 20-23-1z" fill="#ede6e8" stroke="#8e2f3c"/><path d="M2 13h24M13 4v20" stroke="#779"/><path d="M9 12l5 3 8 1M20 7q5 4 1 7t3 5" fill="none" stroke="#777" stroke-width="1.500"/><circle cx="10" cy="14" r="2.500" fill="#999"/><circle cx="21" cy="19" r="3" fill="#fff" stroke="#777"/>`,

  profT: shapeT("#b5000c"),
  areaT: svg`<path d="M1 1h30v30H1z" fill="#c9ccd0" stroke="#666"/><path d="M3 3h26v26H3z" fill="none" stroke="#b5000c"/>${at(4, 3, 0.76, shapeT("#b5000c"))}<path d="M5 15h4v11H5zM23 15h4v11h-4z" fill="none" stroke="#b5000c"/>`,
  vbit: svg`<path d="M12 0h8v13h-8z" fill="url(#steel)"/><path d="M6 13h20l-6 6h-7z" fill="#333"/><path d="M2 20h10l4 4 4-4h10v9H2z" fill="#7da3d0" stroke="#c5000c" stroke-width="1.500"/>`,
  bevel: svg`<path d="M8 0h8v14H8z" fill="url(#steel)"/><path d="M2 15h18l-8 5z" fill="#333"/><path d="M12 27v-5l5-3 13 7v3H12z" fill="#8fb0dc" stroke="#c5000c" stroke-width="1.300"/>`,
  engrave: svg`<text x="7" y="27" font-family="Liberation Sans" font-weight="bold" font-style="italic" font-size="20" fill="#fff" stroke="#555" stroke-width="1" transform="rotate(-8 16 20)">ea</text><path d="M2 2h8l-1 9-2 6-3-6z" fill="url(#steel)" stroke="#666" stroke-width=".5"/><path d="M7 13q0 9 6 8" fill="none" stroke="#fff" stroke-width="2.500"/>`,
  drill: svg`<g fill="none" stroke="#3173b7" stroke-width="1.500"><circle cx="7" cy="7" r="4"/><path d="M7 1v12M1 7h12"/><circle cx="12" cy="17" r="4"/><path d="M12 11v12M6 17h12"/></g><path d="M2 25h5v3H2zM10 28h5v2h-5z" fill="#555"/>${at(11, 0, 1, cutter)}`,
  inlay: svg`<path d="M8 3l8-2 4 3-3 3 6-1 2 3-8 3-4-2-5 1z" fill="#777" stroke="#333"/><path d="M2 20l14-7 14 7-12 9z" fill="#2e6fd0"/><path d="M5 20l11-5 11 5-9 7z" fill="#b9d2f2"/><path d="M11 20l5-3M14 23l7-5M12 18l8 4" stroke="#2e6fd0" stroke-width="2"/><path d="M2 20l16 9v2L2 22z" fill="#f4f6fb"/>`,
  raised: svg`<path d="M3 6l12-4q3 2 3 9 3 5 12 7l-13 11-7-3Q2 20 3 6z" fill="#7378a8"/><path d="M3 6l12-4q2 12 15 16l-12 9Q5 22 3 6z" fill="#a7acd4"/><path d="M3 6q1 15 15 21" fill="none" stroke="#3f4470" stroke-width="2"/><path d="M2 7h4v5H2zM14 24h5v4h-5z" fill="#e01820"/>${at(13, 2, 0.65, cutter)}`,
  machine: svg`<path d="M-2 21l17-10 19 10-17 11z" fill="#979dcb"/><path d="M3 19l8 9M7 17l11 12M10 15l13 11M14 13l13 11" stroke="#565c92" stroke-width="1.300"/>${at(10, -4, 0.75, cutter)}`,
  order: faded(svg`<g fill="none" stroke="#c8222e" stroke-width="1.600"><path d="M3 5h8v8H3zM8 20h8v8H8z"/><circle cx="24" cy="12" r="4.500"/></g><g font-family="Liberation Sans" font-size="8" fill="#222"><text x="13" y="9">1</text><text x="27" y="25">2</text><text x="18" y="31">3</text></g>`, 0.8),
  bridges: faded(svg`<path d="M3 6h26v9h-8v14H11V15H3z" fill="none" stroke="#c5303c" stroke-width="1.400"/><path d="M8 10h16M16 10v16" stroke="#999" stroke-width="2"/><path d="M12 1q4 6 8 0M10 20h3M10 24h3" stroke="#33c" stroke-width="1.800" fill="none"/>`, 0.75),
  drills: svg`<path d="M14 28l17-2-2-9z" fill="#0002"/>${at(-9, 1, 0.95, cutter)}${at(1, 1, 0.95, cutter)}${at(11, 1, 0.95, cutter)}`,
  profO: svg`<path d="M3 3h14v26H3zM18 3h11v26H18zM18 12h11" fill="none" stroke="#b5000c" stroke-width="1.400"/><path d="M6 6h7v20H6zM20 6h6v4h-6zM20 15h6v11h-6z" fill="#fff" stroke="#666" stroke-width="2"/>`,

  relmach: svg`${plate("#c4c4ee", "#8b8cc0")}<path d="M5 17l5-8q6-2 8 1l10 6-6 4z" fill="#8587bb"/><path d="M4 22q7-1 5-12M9 24q5-5 3-12" fill="none" stroke="#e0202a" stroke-width="1.200"/><path d="M18 4v9" stroke="#b18b18" stroke-width="2"/>`,
  featmach: svg`${plate("#c4c4ee", "#8b8cc0")}<path d="M7 18L20 6l3 2-4 4 7-1-4 4-7 0-3 3 7-1-4 4-8 0z" fill="none" stroke="#e0202a" stroke-width="1.500"/>`,
  zlevel: svg`<path d="M2 12v14l14 5 14-8V10z" fill="#a1a1cf"/><path d="M2 11L13 4l17 5-13 8z" fill="#e9d5e6"/><path d="M2 11L13 4l17 5-13 8zM2 16l14 6 14-8M2 21l14 6 14-8M5 10l14 4M9 8l14 4M12 6l13 4" fill="none" stroke="#e0404e" stroke-width="1.200"/>`,
  rough: svg`<path d="M1 12L13 5h14q4 4 3 9v9q-6 8-12 5L1 25z" fill="#9596cc"/><path d="M1 12L13 5h14l-12 8z" fill="#c7c8ef"/><path d="M15 13v15L1 25V12z" fill="#7e7fb6"/><circle cx="24" cy="20" r="7" fill="#e5e5fa"/><path d="M22 14h1M25 15h1M21 17h1M24 18h1" stroke="#e0202a" stroke-width="1.500"/><path d="M19 2v16q-4 3-5 6" fill="none" stroke="#e0202a" stroke-width="2"/><path d="M16 20q-3 4-3 9" stroke="#efd418" stroke-width="2" fill="none"/><path d="M17 0h4v5h-4z" fill="#333"/>`,
  starmach: svg`<path d="M4 28h14l13-5z" fill="#0002"/><path d="M3 15v6l12 7 15-5v-5z" fill="#8f90c4" stroke="#e0404e"/><path d="M2 11l10-1 3-4 6 4 9-1-4 6 3 5-9-1-5 3-5-4-8-1 4-3z" fill="#b5b6df" stroke="#e0404e" stroke-width="1.200"/><path d="M13 10v9" stroke="#5a7" stroke-width="2"/>`,
  inspect: svg`${at(0, 3, 0.9, faded(carved, 0.7))}<circle cx="19" cy="14" r="6" fill="#ffffffcc" stroke="#444" stroke-width="1.500"/><path d="M23 19l8 9" stroke="#555" stroke-width="4.500"/><path d="M23 19l7 8" stroke="#ddd" stroke-width="3"/><path d="M16 14q3-4 6 0t-4 3" stroke="#333" fill="none"/>`,

  simrule: faded(svg`${at(0, 0, 0.9, carved)}${at(14, -1, 0.55, cutter)}<path d="M1 25h30v4H1z" fill="#d6d6d6" stroke="#555"/><path d="M4 26v2M7 26v2M10 26v2M13 26v2M16 26v2M19 26v2M22 26v2M25 26v2M28 26v2" stroke="#333"/>`, 0.55),
  simone: faded(svg`${at(0, 2, 0.95, carved)}${at(16, -1, 0.6, cutter)}`, 0.55),
  simtwo: faded(svg`${at(0, 2, 0.95, carved)}${at(4, 0, 0.85, cutter)}${at(13, -1, 0.75, cutter)}`, 0.6),
  simflat: faded(svg`<path d="M1 18L16 8l15 10-15 10z" fill="#9c9cd0"/><path d="M1 18l15 10v3L1 21z" fill="#7374a8"/><path d="M16 28l15-10v3L16 31z" fill="#5e5f94"/>${at(15, -1, 0.6, cutter)}`, 0.65),
  simdel: faded(svg`${at(0, 2, 0.95, faded(carved, 0.6))}${at(19, 0, 0.42, bin)}`, 0.75),
  simsave: faded(svg`${at(0, 4, 0.95, carved)}${at(0, -1, 0.42, floppy)}`, 0.6),
  simload: svg`${at(0, 4, 0.95, carved)}${at(-1, -2, 0.55, folder)}`,
  simclip: faded(svg`${at(1, 4, 0.9, carved)}<path d="M1 1h8l3 4v12H1z" fill="#c3a882" stroke="#a08460"/>`, 0.65),

  clip: svg`<path d="M4 3h14v20H4z" fill="#a08a68"/><path d="M11 8h12l5 5v17H11z" fill="#d0ae84" stroke="#8f6f45"/>`,
  grad: svg`<path d="M3 3h26v26H3z" fill="#a3a3a3"/><path d="M3 9h26v20H3z" fill="#b4b4b4"/><path d="M3 14h26v15H3z" fill="#c6c6c6"/><path d="M3 20h26v9H3z" fill="#dcdcdc"/>`,
  mona2: svg`<path d="M15 13h16v16H15z" fill="#7f84d2"/><path d="M2 2h18v21H2z" fill="#3a2c10"/><path d="M8 5q5-3 8 2l2 15H5z" fill="#0e0903"/><ellipse cx="12" cy="10" rx="3" ry="4" fill="#e3b659"/>`,
  mona: svg`<path d="M0 0h32v32H0z" fill="#a8a45a"/><path d="M0 16h32v16H0z" fill="#413613"/><path d="M10 6q6-6 12 1l4 25H5z" fill="#160d05"/><ellipse cx="16" cy="11" rx="4.500" ry="6.500" fill="#eec166"/><path d="M10 21q7-5 13 1l-2 5h-9z" fill="#d29a48"/>`,
  bulbs: svg`<circle cx="22" cy="10" r="8" fill="#fff3b0" stroke="#f7b81a" stroke-width="2"/><circle cx="11" cy="12" r="8" fill="#fff0a0" stroke="#f7b81a" stroke-width="2"/><path d="M20 19h6v6h-6zM8 22h6v8H8z" fill="#4a1c05"/>`,
  bulbOff: svg`<path d="M12 20Q5 15 7 9q3-6 9-6t9 6q2 6-5 11v6h-8z" fill="#c9c7a5" stroke="#f2cf1c" stroke-width="2.500"/><path d="M12 25h8v5h-8z" fill="#b78f63"/>`,
  bulbOn: svg`<path d="M12 20Q4 15 6 9q3-7 10-7t10 7q2 6-6 11v6h-8z" fill="#ffe52a"/><path d="M12 25h8v5h-8z" fill="#a98c3c"/>`,
  bulbGlow: svg`<path d="M12 20Q4 15 6 9q3-7 10-7t10 7q2 6-6 11v6h-8z" fill="#ffb62e"/><circle cx="15" cy="10" r="6" fill="#fffbe0"/><path d="M12 24h8v7h-8z" fill="#4b1d10"/>`,
  star: svg`<path d="M9 29l17 1-4-6z" fill="#0003"/><path d="M16 1l4 10 10 1-8 7 3 11-9-6-9 6 3-11-8-7 10-1z" fill="url(#gold)" stroke="#8a5c08"/>`,
  dome: svg`<ellipse cx="18" cy="25" rx="13" ry="4" fill="#0002"/><path d="M4 21Q3 9 16 8q13 0 13 11 0 5-5 7-13 3-20-5z" fill="url(#gold)"/>`,
  pyramid: svg`<path d="M16 4l14 17-12 9L2 22z" fill="#f8e034"/><path d="M16 4v25L2 22z" fill="#c99b2c"/>`,
  rhomb: svg`<path d="M1 15l15-11 15 11-15 12z" fill="url(#gold)"/><path d="M1 15l15 12 15-12v2L16 30 1 17z" fill="#c8962a"/>`,
  capA: dome("M2 27Q5 12 16 11t14 16q-14 3-28 0z"),
  capB: dome("M2 25q-1-9 7-11h15q8 2 6 11-14 3-28 0z"),
  capC: dome("M2 29Q4 4 16 4t14 25q-14 2-28 0z"),
  swap: svg`<path d="M3 3h15v13H3zM12 12h15v14H12z" fill="none" stroke="#111" stroke-width="3"/><path d="M18 7h6v5M6 20v5h5" stroke="#111" fill="none" stroke-width="2"/>`,
};

@customElement("ui-icon")
class UiIcon extends LitElement {
  @property() name = "page";
  @property({ type: Number }) size = 32;
  static styles = css`
    :host { display: inline-flex; flex: none; }
    svg { display: block; overflow: visible; }
  `;
  render() {
    return html`<svg width=${this.size} height=${this.size} viewBox="0 0 32 32" aria-hidden="true">
      <defs>
        <linearGradient id="dark" x1="0" y1="0" x2="1" y2="1"><stop offset="0" stop-color="#555"/><stop offset="1" stop-color="#050505"/></linearGradient>
        <linearGradient id="page" x1="0" y1="0" x2="1" y2="1"><stop offset="0" stop-color="#8fa9c6"/><stop offset="1" stop-color="#d3dde9"/></linearGradient>
        <linearGradient id="bin" x1="0" x2="1"><stop offset="0" stop-color="#2f72e6"/><stop offset=".5" stop-color="#8fbcff"/><stop offset="1" stop-color="#2a5fd0"/></linearGradient>
        <linearGradient id="steel" x1="0" x2="1"><stop offset="0" stop-color="#6f8f8f"/><stop offset=".4" stop-color="#e8f2f1"/><stop offset="1" stop-color="#66807f"/></linearGradient>
        <radialGradient id="lens" cx=".45" cy=".4" r=".6"><stop offset="0" stop-color="#fdfeff"/><stop offset="1" stop-color="#b7c8ea"/></radialGradient>
        <radialGradient id="drop" cx=".4" cy=".6" r=".6"><stop offset="0" stop-color="#fbf8b8"/><stop offset="1" stop-color="#c6bf45"/></radialGradient>
        <radialGradient id="gold" cx=".6" cy=".4" r=".7"><stop offset="0" stop-color="#ffe93c"/><stop offset="1" stop-color="#d99a1c"/></radialGradient>
        <linearGradient id="blueP" x1="0" x2="1"><stop offset="0" stop-color="#5b6396"/><stop offset="1" stop-color="#a2a8d8"/></linearGradient>
      </defs>
      ${ICONS[this.name]}
    </svg>`;
  }
}

/* ---------- shared look ---------- */

const base = css`
  * { box-sizing: border-box; }
  button, input, select { font: inherit; color: inherit; margin: 0; }
  button { padding: 0; border: 0; background: none; }
  .panelbg { background: linear-gradient(90deg, #b4b9c3 0, #c9ccd2 12%, #cdd0d5 24%, #c2c6ce 38%, #a9aeb8 74%, #939aa4 100%); }
  .metal { background: linear-gradient(#cdd0d5 0, #c5c9cf 35%, #a3a9b2 75%, #969da8 100%); }
  .tool { position: relative; display: grid; place-items: center; flex: none; }
  .flyout::after {
    content: ""; position: absolute; right: 0; top: calc(50% - 4px);
    border: 4px solid transparent; border-left-color: #000; border-right: 0;
  }
  .corner::after {
    content: ""; position: absolute; right: 0; bottom: 3px;
    border: 3px solid #6a6e75; border-left-color: transparent; border-top-color: transparent;
  }
  .grip { width: 3px; flex: none; background: repeating-linear-gradient(#333 0 2px, #d5d7da 2px 4px); }
  .sep { width: 2px; flex: none; margin: 0 3px; height: 27px; border-left: 1px solid #666b73; background: #eef0f2; }
  .titlebar {
    height: 20px; flex: none; display: flex; align-items: center; padding: 0 6px 0 3px; gap: 6px;
    border-top: 1px solid #e8e8e8; background: #9c9d9b; color: #3c3c3c;
  }
  .titlebar h2 { margin: 0; flex: 1; font-size: 11px; line-height: 16px; font-weight: 400; white-space: nowrap; }
  .titlebar button { display: grid; place-items: center; width: 10px; height: 14px; }
  .titlebar .help { width: 14px; }
  input[type="checkbox"], input[type="radio"] {
    appearance: none; flex: none; border: 1px solid; border-color: #6c7077 #f2f2f2 #f2f2f2 #6c7077; background: #dcdcdc;
  }
  input[type="radio"] { border-radius: 50%; }
  input[type="checkbox"]:checked { background: #dcdcdc linear-gradient(135deg, transparent 40%, #444 40% 60%, transparent 60%); }
  input[type="radio"]:checked { background: radial-gradient(circle, #555 0 2px, #dcdcdc 3px); }
`;

const pinGlyph = svg`<path d="M3 1h4v6H3zM6.500 1v6M1 7.500h8M5 8v3" fill="none" stroke="#3a3a3a"/>`;
const closeGlyph = svg`<path d="M1 2l8 8M9 2l-8 8" fill="none" stroke="#3a3a3a" stroke-width="1.500"/>`;
const titlebar = (title: string) => html`
  <header class="titlebar">
    <h2>${title}</h2>
    <button class="help" aria-label="Справка"><ui-icon name="book" size="14"></ui-icon></button>
    <button aria-label="Закрепить"><svg width="10" height="12">${pinGlyph}</svg></button>
    <button aria-label="Закрыть"><svg width="10" height="12">${closeGlyph}</svg></button>
  </header>`;

/* ---------- collapsible section of tool buttons ---------- */

interface Section {
  title: string;
  pitch?: "s" | "m" | "l";
  /** name, with ">" appended for a fly-out and a leading "!" for the active tool */
  tools?: string[];
}

@customElement("tool-section")
class ToolSection extends LitElement {
  @property({ attribute: false }) data!: Section;
  @state() private folded = false;
  static styles = [base, css`
    :host { display: block; }
    .head { display: flex; align-items: center; height: 15px; padding: 0 1px 0 2px; background: #939aa3; color: #000; }
    h3 { flex: 1; margin: 0; font: 400 11px/16px "Liberation Sans", sans-serif; white-space: nowrap; }
    .fold {
      width: 13px; height: 14px; display: grid; place-items: center; flex: none;
      border: 1px solid; border-color: #f4f4f4 #63676d #63676d #f4f4f4; background: #a5abb4;
    }
    .grid { display: grid; }
    .s { grid-template-columns: repeat(6, 40px); grid-auto-rows: 40px; }
    .m { grid-template-columns: repeat(6, 43px); grid-auto-rows: 43px; }
    .l { grid-template-columns: repeat(5, 48px); grid-auto-rows: 43px; }
    .tool { isolation: isolate; }
    .on::before {
      content: ""; position: absolute; inset: 1px 5px 1px 1px; z-index: -1;
      background: linear-gradient(#ffd9a0, #ff9a2e 40%, #ffb95a);
    }
  `];
  render() {
    const { title, tools, pitch = "s" } = this.data;
    const open = !!tools && !this.folded;
    return html`
      <div class="head">
        <h3>${title}</h3>
        <button class="fold" aria-label=${title} aria-expanded=${open} @click=${() => (this.folded = !this.folded)}>
          <svg width="9" height="9"><path d=${open ? "M0 9L4.500 0L9 9z" : "M0 0h9L4.500 9z"} fill="#3c3f44"/></svg>
        </button>
      </div>
      ${open ? html`<div class="grid ${pitch}">${tools!.map((t) => {
        const on = t.startsWith("!"), fly = t.endsWith(">");
        const name = t.replace(/[!>]/g, "");
        return html`<button class=${classMap({ tool: true, on, flyout: fly })} aria-label=${name}>
          <ui-icon name=${name} size=${pitch === "s" ? 28 : pitch === "m" ? 30 : 38}></ui-icon></button>`;
      })}</div>` : nothing}`;
  }
}

/* ---------- ruler ---------- */

@customElement("ui-ruler")
class UiRuler extends LitElement {
  @property({ type: Boolean }) vertical = false;
  /** length at the far end that is kept free of numbers */
  @property({ type: Number }) reserve = 8;
  @state() private length = 0;
  private watcher = new ResizeObserver(() => this.measure());
  static styles = css`
    :host { display: block; overflow: hidden; position: relative; background: #b9bec7; }
    svg { display: block; position: absolute; inset: 0; width: 100%; height: 100%; }
    text { font: 11px "Liberation Sans", sans-serif; fill: #000; text-anchor: middle; }
  `;
  connectedCallback() {
    super.connectedCallback();
    this.watcher.observe(this);
  }
  disconnectedCallback() {
    super.disconnectedCallback();
    this.watcher.disconnect();
  }
  private measure() {
    this.length = this.vertical ? this.clientHeight : this.clientWidth;
  }
  render() {
    const step = 8.15;
    const v = this.vertical;
    const origin = v ? 26 : 74;
    let ticks = "";
    const labels: Art[] = [];
    for (let i = -9; origin + i * step < this.length; i++) {
      const p = Math.round(origin + i * step) + 0.5;
      if (p < 0) continue;
      const len = i % 10 === 0 ? 6 : i % 5 === 0 ? 5 : 3;
      ticks += v ? `M20 ${p}h${-len}` : `M${p} 20v${-len}`;
      if (i % 10 === 0 && p < this.length - this.reserve) {
        const n = v ? 28 - i / 5 : 20 + i / 5;
        labels.push(v
          ? svg`<text transform="translate(12 ${p}) rotate(-90)">${n}</text>`
          : svg`<text x=${p - 1} y="11">${n}</text>`);
      }
    }
    return html`<svg>
      <path d=${ticks} stroke="#000" fill="none"/>
      ${labels}
      <path d=${v ? "M0 388.500H20" : "M577.500 0V20"} stroke="#444"/>
    </svg>`;
  }
}

/* ---------- relief shape editor window ---------- */

@customElement("shape-editor")
class ShapeEditor extends LitElement {
  @state() private shape = 2;
  static styles = [base, css`
    :host { display: block; }
    .window {
      width: 362px; padding: 0 6px 7px; border: 1px solid #1b2430; border-radius: 6px;
      background: linear-gradient(100deg, #d5e3f1 0, #a9c3de 35%, #9db4cc 60%, #b4c3d4 100%) top / 100% 130px no-repeat, linear-gradient(#b7c5d6 40%, #8aa9c9 80%, #4f6f92);
      box-shadow: 0 0 0 1px #d9e8f6 inset, 0 2px 14px 3px #0009;
    }
    h2 { margin: 0; height: 27px; font-size: 12px; line-height: 28px; font-weight: 400; color: #000; }
    .body {
      height: 398px; padding: 15px 12px 0 12px; border: 1px solid #4d5a69;
      background: linear-gradient(90deg, #b4b9c3 0, #cdd0d5 14%, #c9ccd2 26%, #a9aeb8 62%, #939aa4 84%);
      display: flex; flex-direction: column;
    }
    .row { display: flex; }
    .upper { height: 141px; }
    .shapes { display: flex; flex-direction: column; gap: 4px; width: 39px; }
    .btn {
      border: 1px solid #6f7276; border-radius: 4px; color: #000; white-space: nowrap;
      background: linear-gradient(#f3f3f3, #e6e6e6 48%, #d3d3d3 52%, #c9c9c9);
      box-shadow: inset 0 0 0 1px #fafafa; overflow: hidden;
    }
    .shapes .btn { height: 44px; display: grid; place-items: center; background: linear-gradient(135deg, #e4e4e4, #c4c4c4); }
    .shapes .btn.on { background: linear-gradient(135deg, #dcecf3, #b6cbd6); }
    .view {
      width: 123px; height: 140px; margin-left: 5px; border: 1px solid #200; background: #f00;
      display: grid; align-items: center; padding: 0 4px;
    }
    .view i { height: 1px; background: #fff; }
    .slot {
      width: 20px; padding: 6px 0; border: 1px solid #80868f; border-right-color: #c5c9ce; display: flex;
      background: repeating-linear-gradient(#000 0 1px, transparent 1px 10px) right 9px / 4px 121px no-repeat;
    }
    .slot.fine { height: 160px; background: repeating-linear-gradient(#000 0 1px, transparent 1px 8px) right 9px / 4px 141px no-repeat; }
    .slot input {
      appearance: none; writing-mode: vertical-lr; direction: rtl; width: 14px; height: 100%;
      background: linear-gradient(90deg, transparent 6px, #6d7279 6px 7px, #fff 7px 9px, transparent 9px);
    }
    .slot input::-webkit-slider-thumb {
      appearance: none; width: 12px; height: 7px; background: #f4f4f4; border: 1px solid #777; border-radius: 0 4px 4px 0;
    }
    .scale { display: flex; flex-direction: column; justify-content: space-between; font-size: 12px; line-height: 20px; }
    .soft { color: #eceef0; text-shadow: -1px -1px 0 #9198a2; }
    .upper .slot { margin-left: 15px; height: 141px; }
    .upper .scale { width: 28px; margin-left: 7px; height: 144px; }
    .fields { display: flex; flex-direction: column; align-items: flex-start; font-size: 12px; line-height: 16px; padding-top: 1px; }
    .field { border: 1px solid; border-color: #5d6269 #fff #fff #5d6269; background: #ececec; padding: 0 5px; width: 52px; height: 25px; color: #6b6b6b; font-size: 12px; }
    .field.live { background: #fff; color: #000; }
    .start { line-height: 16px; margin-top: 25px; color: #000; }
    .start + .field { margin-top: 5px; }
    .spin { display: flex; width: 52px; height: 24px; margin-top: 3px; }
    .spin input.field { flex: 1; min-width: 0; height: 24px; border-right: 0; }
    .steps { width: 17px; display: grid; border: 1px solid #fff; border-left: 0; border-top-color: #5d6269; background: #ececec; padding: 1px; }
    .steps button { background: #e2e2e2; border: 1px solid; border-color: #fff #888 #888 #fff; display: grid; place-items: center; }
    .lower { height: 165px; margin-top: 18px; align-items: flex-start; }
    .left { width: 265px; height: 165px; display: flex; flex-direction: column; justify-content: space-between; }
    .modes { display: grid; grid-template-columns: 35px 17px 118px; width: 170px; align-items: start; font-size: 12px; line-height: 16px; height: 102px; grid-template-rows: 26px 26px 25px 25px; }
    .modes ui-icon { margin-top: -8px; }
    .modes input { width: 12px; height: 12px; margin-top: -4px; }
    .modes label { margin-top: -5px; white-space: nowrap; }
    .check { display: flex; gap: 5px; align-items: center; font-size: 12px; line-height: 16px; }
    .check input { width: 13px; height: 13px; }
    .limits { display: flex; flex-direction: column; font-size: 12px; line-height: 16px; align-items: flex-start; }
    .limits .field { height: 26px; }
    .limits .check + .field { margin-top: 5px; }
    .limits label + .field { margin-top: 2px; }
    .limits > label { margin-top: 6px; }
    .pairs { display: grid; grid-template-columns: 78px 78px 102px; column-gap: 2px; row-gap: 6px; grid-auto-rows: 24px; font-size: 11px; line-height: 16px; }
    .pairs .btn:nth-child(3n) { margin-left: 3px; margin-right: -3px; }
    .pairs .btn span { display: block; margin: -5px 0; }
    .lower .slot { margin-left: 9px; }
    .lower .scale { margin-left: 6px; height: 162px; }
    hr { margin: 5px 0 8px; border: 0; height: 2px; background: #6e7279; width: 100%; }
    .actions { display: grid; grid-template-columns: repeat(3, 1fr); gap: 2px; grid-auto-rows: 28px; font-size: 12px; }
  `];
  render() {
    const modes: [string, string, boolean][] = [
      ["capA", "Без огранич.", false], ["capB", "Огранич. по выс.", true],
      ["capC", "Масштаб по выс.", false], ["capA", "Пост. высота", false],
    ];
    return html`<section class="window" role="dialog" aria-labelledby="t">
      <h2 id="t">Редактор формы</h2>
      <div class="body">
        <div class="row upper">
          <div class="shapes">
            ${["dome", "pyramid", "rhomb"].map((n, i) => html`
              <button class=${classMap({ btn: true, on: this.shape === i })} aria-label=${n} @click=${() => (this.shape = i)}>
                <ui-icon name=${n} size=${i === 2 ? 36 : 30}></ui-icon></button>`)}
          </div>
          <div class="view"><i></i></div>
          <div class="slot"><input type="range" min="-90" max="90" value="45" aria-label="Угол"></div>
          <div class="scale soft"><span>90</span><span>0</span><span>-90</span></div>
          <div class="fields">
            <label class="soft" for="angle">Угол</label>
            <div class="spin">
              <input class="field" id="angle" value="45" readonly>
              <div class="steps">
                <button aria-label="Больше"><svg width="5" height="3"><path d="M0 3L2.500 0L5 3z" fill="#777"/></svg></button>
                <button aria-label="Меньше"><svg width="5" height="3"><path d="M0 0h5L2.500 3z" fill="#777"/></svg></button>
              </div>
            </div>
            <label class="start" for="start">Нач.<br>высота</label>
            <input class="field live" id="start" value="0">
          </div>
        </div>
        <div class="row lower">
          <div class="left">
            <div class="row">
              <div class="modes">
                ${modes.map(([icon, label, on], i) => html`
                  <ui-icon name=${icon} size="28"></ui-icon>
                  <input type="radio" name="mode" id="m${i}" ?checked=${on}>
                  <label class="soft" for="m${i}">${label}${i === 3 ? html`<br>(Для векторов)` : nothing}</label>`)}
              </div>
              <div class="limits">
                <div class="check"><input type="checkbox" id="sc"><label class="soft" for="sc">Масштаб</label></div>
                <input class="field" value="1" aria-label="Масштаб" readonly>
                <label class="soft" for="h">Высота</label>
                <input class="field" id="h" value="0" readonly>
              </div>
            </div>
            <div class="pairs">
              <button class="btn">Добавить</button><button class="btn">Вычитание</button><button class="btn">Обнул. внутри</button>
              <button class="btn"><span>По<br>наибольш.</span></button><button class="btn"><span>По<br>наименьш.</span></button><button class="btn">Обнул. снаружи</button>
            </div>
          </div>
          <div class="slot fine"><input type="range" min="0" max="100" value="54" aria-label="Масштаб"></div>
          <div class="scale soft"><span>5.0</span><span>1.0</span><span>0.1</span></div>
        </div>
        <hr>
        <div class="actions">
          <button class="btn">Применить</button><button class="btn">Сброс</button><button class="btn">Закрыть</button>
        </div>
      </div>
    </section>`;
  }
}

/* ---------- application ---------- */

const MENU = ["Файл", "Правка", "Вид", "Модель", "Векторы", "Растр", "Рельефы", "Траектории", "Окно", "Справка"];
const FILE_TOOLS = ["page^", "folder", "floppy", "|", "cut", "copy", "paste", "|", "undo", "redo", "|", "notes", "|", "book", "|", "options"];
const DESIGN_TOOLS = ["!cursor", "node", "xform", "|", "pencil^", "fill^", "tape^", "|", "polyline", "rect", "ellipse^", "pentagon^", "arc", "text^", "|", "drop", "smudge", "pen", "brush", "eraser", "stamp"];
const VIEW_TOOLS = ["zin", "zout", "zprev", "|", "z11", "zobj", "zfit", "|", "preview"];
const SWATCHES = ["#000000", "#ffffff", "#00ffff", "#3040dc", "#5fbf50", "#d91124", "#a62ae0", "#ffff80", "#ac9c30", "#facc14", "#ff0000"];

ICONS.invfaded = faded(ICONS.invpair);

const HELPER: Section[] = [
  { title: "Информация о модели" },
  { title: "Файл" },
  { title: "Модель" },
  { title: "Редактирование растра" },
  { title: "Редактирование векторов", tools: ["!cursor>", "xform", "rect>", "text", "envelope>", "tape", "cross", "pattern", "warp", "blocks", "curvepaste", "drape", "offset", "fillet", "trim", "relieffromvec", "sweep", "mirror", "starfolder"] },
  { title: "Положение, размер, выравнивание векторов", tools: ["align>", "textcurve", "nesting", "weld>", "merge>", "join>", "texture", "spiral"] },
  { title: "Операции с рельефом", tools: ["!smooth", "loadrelief>", "plane>", "scale", "offsetrel", "pastemode", "sweepS", "weave", "letterb>", "dtm>", "turn", "ramp", "tworail", "ringrel>", "fold", "addshape", "redblock", "pillow", "bluep", "coin", "saw", "yellowpoly", "globe", "bluestar"] },
  { title: "Инструменты работы с обратным рельефом", pitch: "m", tools: ["invblock", "invpair", "invfaded"] },
  { title: "Инструменты создания вставок", pitch: "m", tools: ["gempent", "gemgroup", "geminfo", "ruby", "diamonds"] },
];

const PATHS: Section[] = [
  { title: "Операции с траекторией", pitch: "l", tools: ["tpsave", "tpinfo", "tpdel", "tpcalc", "tpcalcs", "tpsheet", "tprack", "tpdim", "tpdelblk", "tpload", "tpsaveb", "tpxform", "tplong", "tparray", "tpsheet2"] },
  { title: "2D траектории", pitch: "m", tools: ["profT", "areaT", "vbit", "bevel", "engrave", "drill", "inlay", "raised", "machine", "order", "bridges", "drills", "profO"] },
  { title: "3D траектории", pitch: "m", tools: ["relmach", "featmach", "zlevel", "rough", "starmach", "inspect"] },
  { title: "Имитация траектории", pitch: "l", tools: ["simrule", "simone", "simtwo", "simflat", "simdel", "simsave", "simload", "simclip"] },
];

@customElement("app-root")
class AppRoot extends LitElement {
  static styles = [base, css`
    :host { display: block; font-family: "Noto Sans", "Liberation Sans", sans-serif; font-size: 11px; }
    .app { position: relative; display: flex; flex-direction: column; min-height: 100vh; background: #525252; border-top: 1px solid #b5d3e4; overflow: hidden; }
    .menu { height: 25px; flex: none; display: flex; align-items: center; gap: 15px; padding-left: 4px; color: #fff; font-size: 11px; }
    .menu .grip { height: 18px; margin-right: -6px; }
    .menu a { color: inherit; text-decoration: none; line-height: 20px; }
    .bars { display: flex; gap: 2px; height: 57px; flex: none; }
    .bar { display: flex; flex-direction: column; border-radius: 3px 3px 0 0; }
    .bar .tools { height: 43px; display: flex; align-items: center; padding: 0 0 0 4px; }
    .bar .grip { height: 38px; margin-right: 4px; }
    .bar.design .tools { padding: 0 2px 0 3px; }
    .bar .name { height: 14px; background: #939aa4; text-align: center; font-weight: 700; color: #3e4145; line-height: 14px; }
    .bar .tool, .viewbar .tool { width: 41px; height: 41px; }
    .bar .on { background: linear-gradient(#ffe3bd, #ffb14e 45%, #ffcf6b 70%, #ffeaa0); width: 41px; height: 40px; border: 1px solid #d9b27a; }
    .work { flex: 1; display: flex; gap: 5px; min-height: 0; }
    .panel { display: flex; flex-direction: column; flex: none; }
    .helper { width: 274px; }
    .paths { width: 278px; }
    .sections { display: flex; flex-direction: column; gap: 5px; padding: 0 9px 0 10px; }
    .fav { height: 22px; display: flex; justify-content: flex-end; align-items: center; gap: 6px; padding-right: 2px; }
    .fav i { border: 4px solid transparent; border-left: 5px solid #000; border-right: 0; }
    .tree { height: 217px; display: flex; justify-content: space-between; padding: 4px 9px 8px 8px; }
    .tree .side { display: flex; flex-direction: column; justify-content: space-between; align-items: flex-end; padding-top: 20px; }
    .bulbs { display: flex; }
    .moves { display: flex; gap: 4px; }
    .moves button { width: 19px; height: 19px; border: 1px solid #e9eefa; border-radius: 2px; background: linear-gradient(135deg, #0a318f, #1c5fb8); display: grid; place-items: center; }
    .paths .sections { padding-left: 9px; }
    .depth { display: flex; align-items: center; gap: 4px; margin: 7px 0 0 14px; color: #2b4a8a; line-height: 16px; }
    .depth input { width: 12px; height: 12px; background: #eee; border-color: #8a8d92; }
    .material { display: flex; align-items: center; gap: 4px; margin: 4px 0 0 10px; color: #000; line-height: 21px; }
    .pick { position: relative; }
    .pick svg { position: absolute; right: 4px; top: 8px; pointer-events: none; }
    .pick select {
      appearance: none; display: block; width: 160px; height: 21px; border: 1px solid #7a7d82; border-radius: 2px; padding: 0 14px 0 5px; color: #000;
      font: 11px "Liberation Sans", sans-serif; background: linear-gradient(#f4f4f4, #e9e9e9 50%, #dadada);
    }

    .doc { flex: 1; min-width: 0; display: flex; flex-direction: column; background: #c3cbe2; border-right: 2px solid #d8dbe3; }
    .tabs { height: 20px; flex: none; display: flex; align-items: flex-end; background: linear-gradient(#8f959f, #c9ccd3); padding-left: 2px; position: relative; }
    .tab { height: 19px; line-height: 18px; color: #000; }
    .tab.current { font-weight: 700; padding: 0 5px 0 33px; display: flex; justify-content: space-between; align-items: center; width: 195px; background: linear-gradient(#f4fbff, #d3e0fa); clip-path: polygon(18px 0, 100% 0, 100% 100%, 0 100%); }
    .tab.other { width: 63px; border-radius: 3px 3px 0 0; background: linear-gradient(#fff3a8, #fdd86e); text-align: center; border: 1px solid #ab8f4e; border-bottom: 0; padding: 0; }
    .list { position: absolute; right: 4px; top: 8px; width: 10px; height: 6px; }
    .frame { flex: 1; display: flex; flex-direction: column; margin: 2px 2px 4px 3px; background: #525252; min-height: 0; }
    .viewbar { width: 455px; height: 44px; display: flex; align-items: center; padding-left: 3px; border-radius: 0 3px 0 0; flex: none; }
    .viewbar .grip { height: 28px; margin-right: 4px; }
    .viewbar input { appearance: none; width: 126px; height: 20px; margin-left: 10px; background: linear-gradient(transparent 8px, #83888f 8px 9px, #fff 9px 12px, transparent 12px); }
    .viewbar input::-webkit-slider-thumb { appearance: none; width: 10px; height: 18px; border: 1px solid #555; border-radius: 2px; background: linear-gradient(90deg, #fff, #ccc); }
    .canvas {
      flex: 1; margin: 2px 0 0 1px; display: grid; grid-template: 20px 1fr 16px / 20px 1fr 16px; min-height: 0;
      border: 1px solid #222; border-bottom: 2px solid #111; background: #fff; padding-bottom: 2px;
    }
    .box { background: #b9bec7; border: 1px solid; border-color: #f5f5f5 #222 #222 #f5f5f5; display: grid; place-items: center; }
    .top { display: flex; position: relative; border-bottom: 1px solid #000; border-top: 1px solid #fff; }
    .top ui-ruler { flex: 1; }
    .units { position: absolute; right: 1px; top: 2px; font: 9px/11px "Liberation Sans", sans-serif; color: #000; }
    .leftruler { border-right: 1px solid #000; }
    .sheet { position: relative; overflow: hidden; background: #fff; }
    .sheet svg { position: absolute; inset: 0; width: 100%; height: 100%; }
    .vbar { background: #f0f0f0; display: grid; grid-template-rows: 15px 172fr 401fr 215fr; justify-items: center; }
    .hbar { background: #f0f0f0; display: grid; grid-template-columns: 15px 276fr 354fr 359fr; align-items: center; }
    .thumb { border: 1px solid #979797; border-radius: 1px; display: grid; place-items: center; }
    .vbar .thumb { grid-row: 3; width: 15px; background: linear-gradient(90deg, #f4f4f4, #cfcfcf); }
    .hbar .thumb { grid-column: 3; height: 15px; background: linear-gradient(#f4f4f4, #e4e4e4 45%, #cfcfcf); }
    .palette { height: 42px; display: flex; align-items: center; gap: 5px; padding-left: 6px; flex: none; }
    .current-colours { display: grid; grid-template: repeat(3, 1fr) / repeat(3, 1fr); width: 41px; height: 33px; margin-right: 5px; }
    .current-colours b { border: 1px solid #000; }
    .fg { grid-area: 1 / 1 / 3 / 3; background: #f00; z-index: 1; width: 26px; height: 20px; }
    .bg { grid-area: 2 / 2 / 4 / 4; background: #fff; justify-self: end; align-self: end; width: 25px; height: 20px; }
    .current-colours button { grid-area: 1 / 3; justify-self: end; }
    .swatch { width: 30px; height: 30px; border: 1px solid #000; box-shadow: 1px 1px 0 #888; }

    .layers { width: 280px; background: #525252; }
    .layers .inner { flex: 1; display: flex; flex-direction: column; border: 2px solid #dfe2e8; border-top-width: 3px; }
    .ltools { height: 24px; display: flex; align-items: center; padding-left: 2px; }
    .ltools .tool { width: 22px; height: 22px; }
    .ltools .on { width: 20px; height: 20px; background: #ffd690; border: 1px solid #fff0c8; margin-left: 2px; }
    .layer { height: 22px; display: flex; align-items: center; gap: 5px; padding-left: 3px; background: #d3d6e4; color: #000; }
    .ltabs { height: 25px; display: flex; padding: 2px 0 3px; color: #fff; }
    .ltabs button { padding: 0 4px 0 8px; white-space: nowrap; height: 20px; }
    .ltabs .sel { background: linear-gradient(#c9cfd9, #fff); color: #000; border-radius: 0 0 3px 3px; padding: 0 1px 0 4px; }
    .ltabs .sel + button { padding-left: 5px; }
    .rail { width: 21px; margin-left: -3px; padding-top: 4px; display: flex; flex-direction: column; gap: 15px; flex: none; }
    .railtab { writing-mode: vertical-rl; display: flex; align-items: center; gap: 8px; padding: 2px 0; width: 21px; color: #5b584c; font-size: 12px; background: linear-gradient(90deg, #fff0b4, #fbd567); border: 1px solid #fbe7a6; border-right: 0; white-space: nowrap; height: 188px; }
    .railtab.short { height: 74px; }
    .status { height: 19px; flex: none; display: flex; justify-content: flex-end; background: linear-gradient(#4a4e56, #3c3f48 40%, #2e2e2e 45%, #2c2c2c 88%, #6d6f76 90%); color: #fff; }
    .status span { width: 76px; padding-left: 3px; border-left: 1px solid #777; height: 14px; margin-top: 3px; line-height: 16px; white-space: nowrap; }
    .editor { position: absolute; right: 29px; bottom: 47px; z-index: 5; }
  `];

  private tools(list: string[], size = 30) {
    return list.map((t) => {
      if (t === "|") return html`<span class="sep"></span>`;
      const name = t.replace(/[!^]/g, "");
      return html`<button class=${classMap({ tool: true, on: t[0] === "!", corner: t.endsWith("^") })} aria-label=${name}>
        <ui-icon name=${name} size=${size}></ui-icon></button>`;
    });
  }

  render() {
    return html`<div class="app">
      <nav class="menu"><span class="grip"></span>${MENU.map((m) => html`<a href="#">${m}</a>`)}</nav>
      <div class="bars">
        <div class="bar metal">
          <div class="tools"><span class="grip"></span>${this.tools(FILE_TOOLS)}</div>
          <div class="name">Файл</div>
        </div>
        <div class="bar design metal">
          <div class="tools"><span class="grip"></span>${this.tools(DESIGN_TOOLS)}</div>
          <div class="name">Инструменты для дизайна</div>
        </div>
      </div>

      <main class="work">
        <section class="panel helper panelbg">
          ${titlebar("Помощник")}
          <div class="fav"><ui-icon name="star" size="17"></ui-icon><i></i></div>
          <div class="sections">${HELPER.map((s) => html`<tool-section .data=${s}></tool-section>`)}</div>
        </section>

        <section class="panel paths panelbg">
          ${titlebar("Траектории")}
          <div class="tree">
            <ui-icon name="blocks4" size="44"></ui-icon>
            <div class="side">
              <div class="bulbs">
                <ui-icon name="bulbOff" size="16"></ui-icon><ui-icon name="bulbOn" size="16"></ui-icon><ui-icon name="bulbGlow" size="16"></ui-icon>
              </div>
              <div class="moves">
                <button aria-label="Вверх"><svg width="13" height="13"><path d="M6.500 12V2M2 6l4.500-4.500L11 6" fill="none" stroke="#fff" stroke-width="2"/></svg></button>
                <button aria-label="Вниз"><svg width="13" height="13"><path d="M6.500 1v10M2 7l4.500 4.500L11 7" fill="none" stroke="#fff" stroke-width="2"/></svg></button>
              </div>
            </div>
          </div>
          <div class="sections">${PATHS.map((s) => html`<tool-section .data=${s}></tool-section>`)}</div>
          <div class="depth"><input type="checkbox" id="depth"><label for="depth">Цвет глубины</label></div>
          <div class="material"><label for="mat">Материал</label>
            <div class="pick"><select id="mat"><option>Значен. имитац. по умолч.</option></select><svg width="8" height="5"><path d="M0 0h8L4 5z"/></svg></div>
          </div>
        </section>

        <section class="doc">
          <div class="tabs">
            <div class="tab current"><span>2D Вид - Растровый слой</span><svg width="9" height="9"><path d="M1 1l7 7M8 1L1 8" stroke="#555" stroke-width="1.500"/></svg></div>
            <button class="tab other">3D вид</button>
            <svg class="list"><path d="M0 0h10L5 5.500z" fill="#444a55"/></svg>
          </div>
          <div class="frame">
            <div class="viewbar metal">
              <span class="grip"></span>${this.tools(VIEW_TOOLS)}
              <input type="range" value="100" aria-label="Контраст">
            </div>
            <div class="canvas">
              <div class="box"><svg width="15" height="13"><path d="M0 5.500h15M0 9.500h15M6.500 0v13M10.500 0v13" stroke="#111" stroke-dasharray="2 1"/></svg></div>
              <div class="top"><ui-ruler reserve="60"></ui-ruler><span class="units">millimetres</span></div>
              <button class="box" aria-label="Линейка"><svg width="10" height="9"><path d="M1 .5h8M1 4h8L5 8z" stroke="#000"/></svg></button>
              <ui-ruler class="leftruler" vertical></ui-ruler>
              <div class="sheet">
                <svg><path d="M180.500 292V530A18.500 17 0 0 0 217.500 530V330L454 495A18 18 0 0 0 480.500 480L479.500 376.500L698.500 433C706 435 712 429 710 422 709 418 706 417 703 416L469 334.500A19 19 0 0 0 442.500 351L444.600 442L211 279A19 19 0 0 0 180.500 292z" fill="none" stroke="#222"/></svg>
              </div>
              <div class="vbar"><svg width="8" height="15"><path d="M1 9l3-4 3 4z" fill="#444"/></svg>
                <div class="thumb"><svg width="8" height="8"><path d="M0 1.500h8M0 4.500h8M0 7.500h8" stroke="#555"/></svg></div></div>
              <button class="box" aria-label="Слой"><svg width="10" height="9"><path d="M1.500 0v9M4 0v9l5-4.500z" stroke="#000"/></svg></button>
              <div class="hbar"><svg width="15" height="10"><path d="M10 1L6 5l4 4z" fill="#444"/></svg>
                <div class="thumb"><svg width="9" height="8"><path d="M1.500 0v8M4.500 0v8M7.500 0v8" stroke="#555"/></svg></div></div>
              <div class="vbar"></div>
            </div>
            <div class="palette">
              <div class="current-colours"><b class="fg"></b><b class="bg"></b><button aria-label="Поменять"><ui-icon name="swap" size="12"></ui-icon></button></div>
              ${SWATCHES.map((c) => html`<button class="swatch" aria-label=${c} style=${styleMap({ background: c })}></button>`)}
            </div>
          </div>
        </section>

        <section class="panel layers">
          ${titlebar("Растровые слои")}
          <div class="inner panelbg">
            <div class="ltools metal">${this.tools(["page", "folder", "floppy", "clip", "grad", "mona2", "bin", "!bulbs"], 16)}</div>
            <div class="layer"><ui-icon name="mona" size="16"></ui-icon><span>Растровый слой</span></div>
          </div>
          <div class="ltabs"><button>Рельефные сл...</button><button class="sel">Растровые слои</button><button>Векторные сл...</button></div>
        </section>

        <aside class="rail">
          <button class="railtab"><ui-icon name="notes" size="16"></ui-icon><span>Обучающие руководства</span></button>
          <button class="railtab short"><ui-icon name="notes" size="16"></ui-icon><span>Live!</span></button>
        </aside>
      </main>

      <footer class="status"><span>X: 30.485</span><span>Y: 18.832</span><span>Z: -1.000</span><span></span><span></span></footer>
      <shape-editor class="editor"></shape-editor>
    </div>`;
  }
}
